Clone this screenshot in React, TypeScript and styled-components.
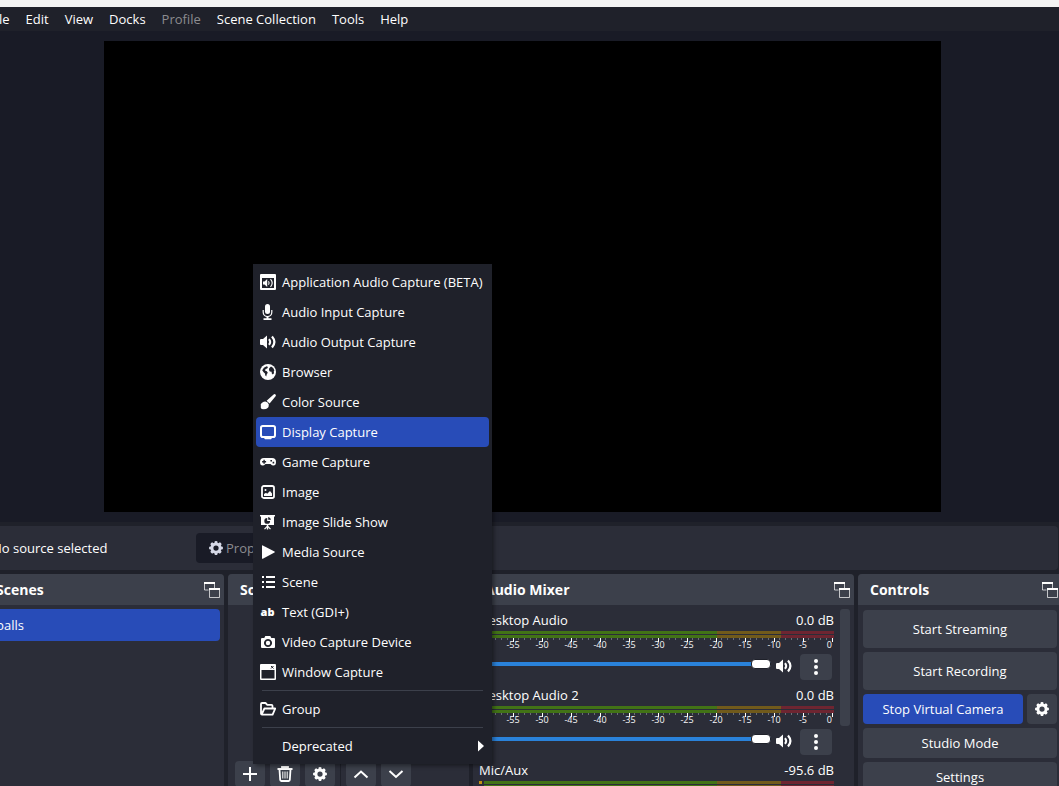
import React from "react";
import styled, { createGlobalStyle } from "styled-components";

const c = {
  base: "#1f212a",
  panel: "#2b2d38",
  raised: "#3c404b",
  deep: "#191b26",
  accent: "#284cb8",
  text: "#fefefe",
  muted: "#8c8c90",
  green: "#427316",
  yellow: "#715a1b",
  red: "#6e2531",
  slider: "#2a82da",
};

const GlobalStyle = createGlobalStyle`
  * { box-sizing: border-box; }
  html, body { margin: 0; height: 100%; overflow: hidden; background: ${c.base}; }
  body, button, input { font-family: "Open Sans", "Noto Sans", sans-serif; font-size: 13px; color: ${c.text}; }
  button { border: 0; margin: 0; padding: 0; }
  svg { display: block; flex: none; }
`;

const Window = styled.div`
  position: relative;
  display: flex;
  flex-direction: column;
  width: calc(100% + 19px);
  height: 100vh;
  margin-left: -16px;
  overflow: hidden;
`;

const TitleStrip = styled.div`
  flex: none;
  height: 7px;
  background: #f3f3f3;
`;

const MenuBar = styled.nav`
  flex: none;
  display: flex;
  height: 24px;
  padding-left: 5px;
  background: ${c.base};
`;

const MenuButton = styled.button`
  padding: 0 8px;
  background: none;
  line-height: 24px;
  &:first-child { padding-left: 0; }
  &:disabled { color: ${c.muted}; }
`;

const Preview = styled.main`
  flex: none;
  padding: 10px 121px 10px 120px;
  background: ${c.deep};
`;

const Canvas = styled.div`
  aspect-ratio: 837 / 471;
  background: #000;
`;

const ContextBar = styled.section`
  flex: none;
  display: flex;
  align-items: center;
  height: 44px;
  margin: 4px 4px 4px 0;
  padding-left: 8px;
  border-radius: 4px;
  background: ${c.panel};
`;

const SourceLabel = styled.span`
  width: 204px;
`;

const PropertiesButton = styled.button`
  display: flex;
  align-items: center;
  gap: 3px;
  height: 30px;
  padding: 0 13px;
  border-radius: 4px;
  background: ${c.deep};
  color: ${c.muted};
  svg { color: #d5d8e6; }
`;

const Docks = styled.div`
  flex: 1;
  min-height: 0;
  display: grid;
  grid-template-columns: 240fr 241fr 381fr 204fr;
  gap: 4px;
`;

const DockFrame = styled.section`
  display: flex;
  flex-direction: column;
  min-width: 0;
  min-height: 0;
  overflow: hidden;
  border-radius: 4px 4px 0 0;
  background: ${c.panel};
`;

const DockHeader = styled.header`
  flex: none;
  display: flex;
  align-items: center;
  justify-content: space-between;
  height: 31px;
  padding: 0 4px 0 12px;
  background: ${c.raised};
`;

const DockTitle = styled.h2`
  margin: 0;
  font-size: 14px;
  line-height: 20px;
  font-weight: 700;
`;

const DockButton = styled.button`
  background: none;
`;

const SceneList = styled.div`
  padding: 4px;
`;

const SceneItem = styled.button`
  width: 100%;
  height: 32px;
  padding: 0 8px;
  border-radius: 4px;
  background: ${c.accent};
  text-align: left;
`;

const SourceSpace = styled.div`
  flex: 1;
`;

const Toolbar = styled.div`
  flex: none;
  display: flex;
  gap: 5px;
  padding: 0 7px;
  margin-bottom: -1px;
`;

const ToolButton = styled.button`
  display: grid;
  place-items: center;
  width: 30px;
  height: 26px;
  border-radius: 4px;
  background: ${c.raised};
`;

const ToolDivider = styled.span`
  width: 1px;
  background: ${c.base};
`;

const MixerBody = styled.div`
  flex: 1;
  min-height: 0;
  display: flex;
  gap: 6px;
  padding: 4px 4px 0 6px;
`;

const Channels = styled.div`
  flex: 1;
  min-width: 0;
`;

const ScrollThumb = styled.div`
  width: 10px;
  height: 117px;
  border-radius: 3px;
  background: ${c.raised};
`;

const Channel = styled.div`
  height: 75px;
`;

const ChannelHead = styled.div`
  display: flex;
  justify-content: space-between;
  line-height: 22px;
`;

const MeterRow = styled.div`
  display: flex;
  gap: 2px;
`;

const Clip = styled.span<{ $lit?: boolean }>`
  width: 3px;
  height: 3px;
  background: ${(p) => (p.$lit ? "#c29013" : c.green)};
`;

const MeterBody = styled.div`
  flex: 1;
  min-width: 0;
`;

const Bar = styled.div`
  height: 3px;
  margin-bottom: 1px;
  background: linear-gradient(
    to right,
    ${c.green} 66.7%,
    ${c.yellow} 66.7% 85%,
    ${c.red} 85%
  );
  & + & { margin-bottom: 0; }
`;

const Scale = styled.svg`
  width: calc(100% - 2px);
  height: 16px;
  overflow: visible;
  text { font-size: 9px; fill: #f8f8f8; }
`;

const ChannelControls = styled.div`
  display: flex;
  align-items: center;
  height: 26px;
  padding-right: 2px;
`;

const VolumeSlider = styled.input`
  appearance: none;
  flex: 1;
  min-width: 0;
  height: 10px;
  margin: 0 5px 6px 0;
  background: linear-gradient(${c.slider}, ${c.slider}) center / 100% 4px no-repeat;
  &::-webkit-slider-thumb {
    appearance: none;
    width: 20px;
    height: 10px;
    border: 1px solid ${c.base};
    border-radius: 4px;
    background: #fff;
  }
`;

const MuteButton = styled.button`
  margin: 0 8px 2px 0;
  background: none;
`;

const OptionsButton = styled.button`
  display: grid;
  place-items: center;
  width: 32px;
  height: 26px;
  border-radius: 4px;
  background: ${c.raised};
`;

const ControlList = styled.div`
  display: flex;
  flex-direction: column;
  gap: 4px;
  padding: 5px;
`;

const ControlRow = styled.div`
  display: flex;
  gap: 4px;
`;

const ControlButton = styled.button<{ $tall?: boolean; $active?: boolean; $square?: boolean }>`
  display: grid;
  place-items: center;
  flex: ${(p) => (p.$square ? "0 0 30px" : "1 0 auto")};
  height: ${(p) => (p.$tall ? 38 : 30)}px;
  border-radius: 4px;
  background: ${(p) => (p.$active ? c.accent : c.raised)};
`;

const Popup = styled.div`
  position: absolute;
  left: 269px;
  top: 264px;
  width: 239px;
  padding: 3px;
  background: ${c.base};
  box-shadow: 2px 2px 4px rgba(0, 0, 0, 0.4);
`;

const PopupItem = styled.button<{ $active?: boolean }>`
  display: flex;
  align-items: center;
  gap: 6px;
  width: 100%;
  height: 30px;
  padding: 0 4px;
  border-radius: 4px;
  background: ${(p) => (p.$active ? c.accent : "none")};
  text-align: left;
  white-space: nowrap;
`;

const PopupLabel = styled.span`
  flex: 1;
`;

const Separator = styled.hr`
  height: 1px;
  margin: 3px 6px;
  border: 0;
  background: ${c.raised};
`;

const Icon = ({ children, size = 16 }: { children?: React.ReactNode; size?: number }) => (
  <svg width={size} height={size} viewBox="0 0 16 16" fill="currentColor" aria-hidden="true">
    {children}
  </svg>
);

const line = (width: number) => ({ fill: "none", stroke: "currentColor", strokeWidth: width });

const Gear = () => (
  <Icon size={14}>
    <circle cx="8" cy="8" r="4.7" {...line(3.4)} />
    {[0, 45, 90, 135, 180, 225, 270, 315].map((a) => (
      <path key={a} d="M6.2 3 6.5 .3Q8-.2 9.5 .3L9.8 3Z" transform={`rotate(${a} 8 8)`} />
    ))}
  </Icon>
);

const Speaker = () => (
  <Icon>
    <path d="M1 5h2L7 1.4v13.2L3 11H1Q0 11 0 10V6Q0 5 1 5Z" />
    <path d="M9 5.2q2.4 2.8 0 5.6" {...line(2)} />
    <path d="M12 2.5q4.8 5.5 0 11" {...line(2.2)} />
  </Icon>
);

const Popout = () => (
  <Icon>
    <path d="M.5 1v7h4M10.5 1v5M5.5 7v8.5h10V7" {...line(1)} opacity=".7" />
    <path d="M0 0h11v2H0ZM5 6h11v2H5Z" />
  </Icon>
);

const Dots = () => (
  <Icon>
    <circle cx="8" cy="2" r="2" />
    <circle cx="8" cy="8" r="2" />
    <circle cx="8" cy="14" r="2" />
  </Icon>
);

const icons: Record<string, React.ReactNode> = {
  app: (
    <>
      <path fillRule="evenodd" d="M1 0h14q1 0 1 1v14q0 1-1 1H1q-1 0-1-1V1Q0 0 1 0ZM2 4v10h12V4Z" />
      <path d="M3 7.4h1.5L7.2 5v8L4.5 10.6H3Z" />
      <path d="M8.5 7.2q1.3 1.8 0 3.6M10.5 5.2q3.4 3.8 0 7.6" {...line(1.1)} />
    </>
  ),
  mic: (
    <>
      <rect x="5" y="0" width="5" height="10" rx="2.5" />
      <path d="M3.2 6v2.2a4.3 4.3 0 0 0 8.6 0V6" {...line(1.2)} />
      <path d="M6.5 12h2v2.2h3V16h-8v-1.8h3Z" />
    </>
  ),
  globe: (
    <>
      <circle cx="8" cy="8" r="8" />
      <path
        fill={c.base}
        d="M2.2 6.2Q3.4 3 6.6 2.2L8 3 7.2 4.4 5.6 5 5 6.6l1.8.6 1 1.6-1 1.4-.6 2.4-1-1.4-.2-1.8-1.4-1.2ZM9.2 4.2l1.8-1.8q2.8 1 3.4 4l-.6.8.2 2-1.2 1.4-1-1.2-.2-1.6-1.8-.2-.8-1.6Z"
      />
    </>
  ),
  brush: (
    <>
      <path d="M13.6.5q1.2-.8 1.9 0 .8.9-.1 2L9.6 9.4 6.6 6.8Z" />
      <path d="M5.4 7.4q2.8.4 3.4 3 .2 4.8-5.1 4.8-2.7 0-2.9-1.5V10.5q1-2.8 4.6-3.1Z" />
    </>
  ),
  display: (
    <>
      <rect x="1" y="2" width="14" height="11" rx="1.8" {...line(2)} />
      <path d="M4 14h8l-1 1.3H5Z" />
    </>
  ),
  gamepad: (
    <path
      fillRule="evenodd"
      d="M4 4h8q4 .2 4 4 0 3.6-2.6 3.6Q12 11.6 10.5 10h-5Q4 11.6 2.6 11.6 0 11.6 0 8q0-3.8 4-4ZM3.4 5.8v1.3H2.1v1.4h1.3v1.3h1.4V8.5h1.3V7.1H4.8V5.8Zm7 .2v1.6H12V6Zm2.2 1.8v1.6h1.6V7.8Z"
    />
  ),
  image: (
    <>
      <rect x="2" y="2" width="12" height="12" rx="1.8" {...line(1.8)} />
      <circle cx="5.5" cy="6" r="1" />
      <path d="M4 12v-2l2-1.2 1.2 1L10 7l2 2.6V12Z" />
    </>
  ),
  slides: (
    <>
      <path fillRule="evenodd" d="M0 1h15v1.6h-1V11H1V2.6H0ZM7.2 4a2.9 2.9 0 1 0 2.9 2.9H7.2ZM8.2 3v2.8H11Q10.7 3.4 8.2 3Z" />
      <path d="M6.8 11h1.4v4.5H6.8Z" />
      <path d="m4.5 15.2 3-3 3 3" {...line(1.2)} />
    </>
  ),
  play: <path d="M2 1.8Q2 1 2.8 1.4L14.5 7.4q.8.6 0 1.2L2.8 14.7Q2 15 2 14.2Z" />,
  list: (
    <path d="M2 2h2v2H2ZM6 2h9v2H6ZM2 7h2v2H2ZM6 7h9v2H6ZM2 12h2v2H2ZM6 12h9v2H6Z" />
  ),
  text: (
    <text x="7.5" y="12" textAnchor="middle" fontSize="11" fontWeight="800" fontFamily="Open Sans, sans-serif">
      ab
    </text>
  ),
  camera: (
    <>
      <path
        fillRule="evenodd"
        d="M5.3 2h5l1 2H14q1 0 1 1v8q0 1-1 1H2q-1 0-1-1V5q0-1 1-1h2.3ZM8 5a4 4 0 1 0 .01 0Z"
      />
      <circle cx="8" cy="9" r="2.2" />
    </>
  ),
  window: (
    <>
      <path fillRule="evenodd" d="M1 0h14q1 0 1 1v14q0 1-1 1H1q-1 0-1-1V1Q0 0 1 0ZM1.5 6v8.5h13V6Z" />
      <path d="m11 2 2.5 2.5M13.5 2 11 4.5" stroke={c.base} strokeWidth="1" />
    </>
  ),
  folder: (
    <path
      d="M1 13V3q0-1 1-1h3.5l1.8 1.8h4.2q1 0 1 1v1.7M1.4 14l3-6.5h10.8l-2.6 6.2H2Q1 13.7 1 12.5"
      strokeLinejoin="round"
      {...line(1.8)}
    />
  ),
};

const sourceTypes: [string, string][] = [
  ["app", "Application Audio Capture (BETA)"],
  ["mic", "Audio Input Capture"],
  ["speaker", "Audio Output Capture"],
  ["globe", "Browser"],
  ["brush", "Color Source"],
  ["display", "Display Capture"],
  ["gamepad", "Game Capture"],
  ["image", "Image"],
  ["slides", "Image Slide Show"],
  ["play", "Media Source"],
  ["list", "Scene"],
  ["text", "Text (GDI+)"],
  ["camera", "Video Capture Device"],
  ["window", "Window Capture"],
];

const MeterScale = () => (
  <Scale aria-hidden="true">
    {Array.from({ length: 61 }, (_, i) => {
      const major = i % 5 === 0;
      return (
        <line
          key={i}
          x1={`${(i / 60) * 100}%`}
          x2={`${(i / 60) * 100}%`}
          y1="0"
          y2={major ? 4 : 2}
          stroke={major ? "#fff" : "#6b6e78"}
          shapeRendering="crispEdges"
        />
      );
    })}
    {Array.from({ length: 12 }, (_, i) => (
      <text key={i} x={`${((i + 1) / 12) * 100}%`} y="10" textAnchor={i === 11 ? "end" : "middle"}>
        {(i + 1) * 5 - 60}
      </text>
    ))}
  </Scale>
);

const MixerChannel = ({ name, level, lit }: { name: string; level: string; lit?: boolean }) => (
  <Channel>
    <ChannelHead>
      <span>{name}</span>
      <span>{level}</span>
    </ChannelHead>
    <MeterRow>
      <Clip $lit={lit} />
      <MeterBody>
        <Bar />
        <Bar />
        <MeterScale />
      </MeterBody>
    </MeterRow>
    <ChannelControls>
      <VolumeSlider type="range" min={0} max={100} defaultValue={100} aria-label={`${name} volume`} />
      <MuteButton aria-label={`Mute ${name}`}>
        <Speaker />
      </MuteButton>
      <OptionsButton aria-label={`${name} options`}>
        <Dots />
      </OptionsButton>
    </ChannelControls>
  </Channel>
);

const Dock = ({ title, children }: { title: string; children: React.ReactNode }) => (
  <DockFrame>
    <DockHeader>
      <DockTitle>{title}</DockTitle>
      <DockButton aria-label={`Undock ${title}`}>
        <Popout />
      </DockButton>
    </DockHeader>
    {children}
  </DockFrame>
);

export default function App() {
  return (
    <>
      <GlobalStyle />
      <Window>
        <TitleStrip />
        <MenuBar>
          {["File", "Edit", "View", "Docks", "Profile", "Scene Collection", "Tools", "Help"].map((m) => (
            <MenuButton key={m} disabled={m === "Profile"}>
              {m}
            </MenuButton>
          ))}
        </MenuBar>
        <Preview>
          <Canvas />
        </Preview>
        <ContextBar>
          <SourceLabel>No source selected</SourceLabel>
          <PropertiesButton disabled>
            <Gear />
            Properties
          </PropertiesButton>
        </ContextBar>
        <Docks>
          <Dock title="Scenes">
            <SceneList>
              <SceneItem>balls</SceneItem>
            </SceneList>
          </Dock>
          <Dock title="Sources">
            <SourceSpace />
            <Toolbar>
              <ToolButton aria-label="Add source">
                <Icon>
                  <path d="M8 1v14M1 8h14" {...line(2)} />
                </Icon>
              </ToolButton>
              <ToolButton aria-label="Remove source">
                <Icon>
                  <path d="M.5 3h15M5 2.5V1h6v1.5" {...line(1.8)} />
                  <path d="M2.5 3.5 3.2 14q.1 1 1.1 1h7.4q1 0 1.1-1l.7-10.5" {...line(1.8)} />
                  <path d="M5.8 5.5v7M8 5.5v7M10.2 5.5v7" {...line(1)} />
                </Icon>
              </ToolButton>
              <ToolButton aria-label="Source properties">
                <Gear />
              </ToolButton>
              <ToolDivider />
              <ToolButton aria-label="Move up">
                <Icon>
                  <path d="m1.5 11.5 6.5-6 6.5 6" {...line(2)} />
                </Icon>
              </ToolButton>
              <ToolButton aria-label="Move down">
                <Icon>
                  <path d="m1.5 5 6.5 6 6.5-6" {...line(2)} />
                </Icon>
              </ToolButton>
            </Toolbar>
          </Dock>
          <Dock title="Audio Mixer">
            <MixerBody>
              <Channels>
                <MixerChannel name="Desktop Audio" level="0.0 dB" />
                <MixerChannel name="Desktop Audio 2" level="0.0 dB" />
                <MixerChannel name="Mic/Aux" level="-95.6 dB" lit />
              </Channels>
              <ScrollThumb />
            </MixerBody>
          </Dock>
          <Dock title="Controls">
            <ControlList>
              <ControlButton $tall>Start Streaming</ControlButton>
              <ControlButton $tall>Start Recording</ControlButton>
              <ControlRow>
                <ControlButton $active>Stop Virtual Camera</ControlButton>
                <ControlButton $square aria-label="Virtual camera settings">
                  <Gear />
                </ControlButton>
              </ControlRow>
              <ControlButton>Studio Mode</ControlButton>
              <ControlButton>Settings</ControlButton>
            </ControlList>
          </Dock>
        </Docks>
        <Popup role="menu">
          {sourceTypes.map(([icon, label]) => (
            <PopupItem key={label} role="menuitem" $active={icon === "display"}>
              {icon === "speaker" ? <Speaker /> : <Icon>{icons[icon]}</Icon>}
              <PopupLabel>{label}</PopupLabel>
            </PopupItem>
          ))}
          <Separator />
          <PopupItem role="menuitem">
            <Icon>{icons.folder}</Icon>
            <PopupLabel>Group</PopupLabel>
          </PopupItem>
          <Separator />
          <PopupItem role="menuitem">
            <Icon />
            <PopupLabel>Deprecated</PopupLabel>
            <Icon>
              <path d="M9 2.5 15 8l-6 5.5Z" />
            </Icon>
          </PopupItem>
        </Popup>
      </Window>
    </>
  );
}
